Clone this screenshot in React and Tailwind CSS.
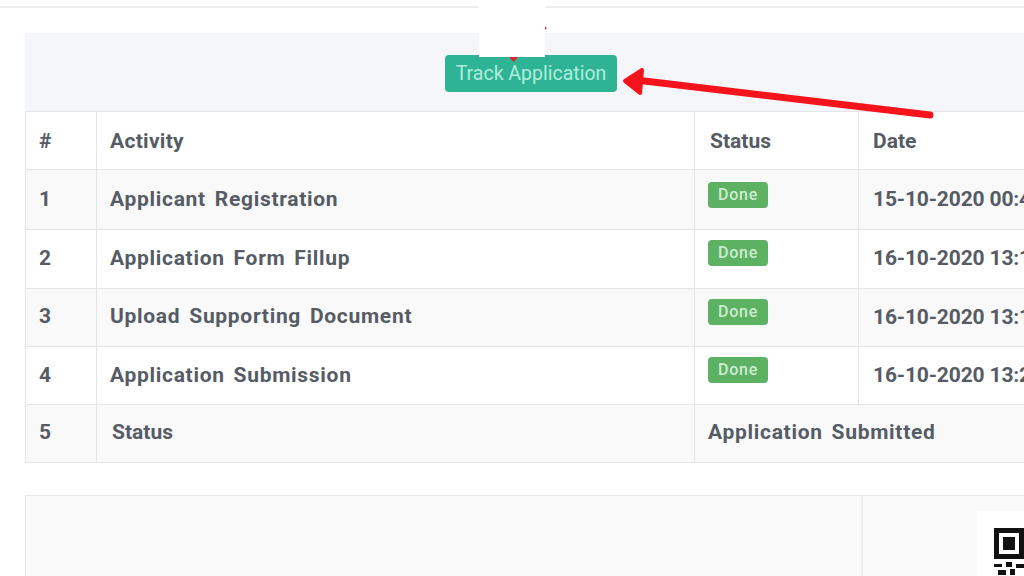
const rows = [
  { n: "1", a: "Applicant Registration", d: "15-10-2020 00:45", h: "h-[60px]", bg: "bg-[#f9f9f9]", top: "-mt-[9px]", pad: "" },
  { n: "2", a: "Application Form Fillup", d: "16-10-2020 13:15", h: "h-[59px]", bg: "bg-white", top: "-mt-[12px]", pad: "" },
  { n: "3", a: "Upload Supporting Document", d: "16-10-2020 13:18", h: "h-[58px]", bg: "bg-[#f9f9f9]", top: "-mt-[11px]", pad: "pb-[2px]" },
  { n: "4", a: "Application Submission", d: "16-10-2020 13:22", h: "h-[58px]", bg: "bg-white", top: "-mt-[11px]", pad: "" },
];

const cell = "border border-[#e3e5e7] align-middle";
const wide = "tracking-[0.7px] [word-spacing:3px]";

function Badge({ top }) {
  return (
    <span className={`flex h-[26px] w-[60px] items-center justify-center rounded-[4px] bg-[#5cb163] text-[16px] font-medium tracking-[0.8px] text-[#cdeccf] ${top}`}>
      Done
    </span>
  );
}

export default function App() {
  return (
    <div className="relative h-[576px] w-[1024px] overflow-hidden bg-white font-['Roboto','Liberation_Sans',sans-serif] text-[21px] font-bold text-[#565c66]">
      <div className="h-[8px] border-b-2 border-[#eeeeee]" />
      <div className="ml-[25px] mt-[25px] w-[1100px]">
        <div className="h-[78px] bg-[#f4f6f9] pl-[420px] pt-[22px]">
          <button className="h-[37px] w-[172px] rounded-[4px] bg-[#2eb495] pt-[1px] text-[19.5px] font-normal text-[#b0ecdc]">
            Track Application
          </button>
        </div>
        <table className="w-[1100px] table-fixed border-collapse">
          <colgroup>
            <col className="w-[71px]" />
            <col className="w-[598px]" />
            <col className="w-[164px]" />
            <col />
          </colgroup>
          <tbody>
            <tr className="h-[58px] bg-white">
              <td className={`${cell} pl-[13px] pt-[2px]`}>#</td>
              <td className={`${cell} pl-[13px] pt-[2px] tracking-[0.3px]`}>Activity</td>
              <td className={`${cell} pl-[15px] pt-[2px]`}>Status</td>
              <td className={`${cell} pl-[14px] pt-[2px]`}>Date</td>
            </tr>
            {rows.map((r) => (
              <tr key={r.n} className={`${r.h} ${r.bg}`}>
                <td className={`${cell} pl-[13px] ${r.pad}`}>{r.n}</td>
                <td className={`${cell} pl-[13px] ${r.pad} ${wide}`}>{r.a}</td>
                <td className={`${cell} pl-[13px]`}>
                  <Badge top={r.top} />
                </td>
                <td className={`${cell} pl-[14px] tracking-[-0.15px]`}>{r.d}</td>
              </tr>
            ))}
            <tr className="h-[58px] bg-[#f9f9f9]">
              <td className={`${cell} pb-[2px] pl-[13px]`}>5</td>
              <td className={`${cell} pb-[2px] pl-[15px]`}>Status</td>
              <td className={`${cell} pb-[2px] pl-[13px] ${wide}`} colSpan={2}>Application Submitted</td>
            </tr>
          </tbody>
        </table>
        <div className="mt-[32px] flex h-[100px] border border-[#e8e8e8] bg-[#f9f9f9]">
          <div className="w-[837px] border-r-2 border-[#ececec]" />
          <div className="pl-[114px] pt-[15px]">
            <div className="h-[90px] w-[60px] bg-white pl-[17px] pt-[17px]">
              <svg width="40" height="50" viewBox="0 0 40 50">
                <path d="M0 0h30v31H0z M5 5v21h20V5z" fill="#111" fillRule="evenodd" />
                <rect x="9" y="9" width="12" height="13" fill="#111" />
                <path d="M0 36h8v3H0z M12 34h6v5h-6z M22 36h8v4h-8z M4 42h8v5H4z M16 41h5v6h-5z" fill="#111" />
              </svg>
            </div>
          </div>
        </div>
      </div>
      <svg className="absolute left-0 top-0" width="1024" height="130" viewBox="0 0 1024 130">
        <path d="M636 80 L930 115" stroke="#f5141c" strokeWidth="7" strokeLinecap="round" fill="none" />
        <path d="M625 81 L642 70 L640 93 Z" fill="#f5141c" stroke="#f5141c" strokeWidth="4" strokeLinejoin="round" />
        <path d="M508 56 L519 56 L513.5 62 Z" fill="#d8262c" />
        <path d="M544 26 L547 28 L544 31 Z" fill="#d8262c" />
      </svg>
      <div className="absolute left-[479px] top-0 h-[57px] w-[66px] bg-white" />
    </div>
  );
}
